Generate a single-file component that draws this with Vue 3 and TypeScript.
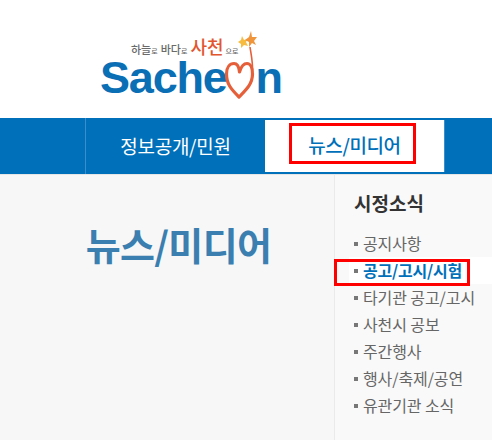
<template>
  <div class="page">
    <header class="top">
      <div class="logo">
        <div class="slogan">
          <span class="s1">하늘</span><span class="s2">로</span>
          <span class="s1">바다</span><span class="s2">로</span>
          <span class="s3">사천</span><span class="s2">으로</span>
        </div>
        <div class="word">
          <span>Sache</span>
          <svg class="heart" viewBox="0 0 30 60" width="30" height="60">
            <path d="M17 -6 L19 -2 L23 -3 L21 0 L23 4 L19 3 L16 6 L16 2 L13 0 L16 -2 Z" fill="#f7bc3f" />
            <path d="M26 -11 L27 -5 L32 -5 L29 -1 L31 3 L27 1 L24 5 L24 0 L20 -2 L24 -5 Z" fill="#f0953a" />
            <path d="M14 55 C6 47 1.5 42 1.5 32 C1.5 25 5 21.5 9 21.5 C12.5 21.5 14 25 14.5 30 C16 25 19 21.5 22 21.5 C25.5 21.5 27.5 26 27.5 32 C27.5 42 21 48 14 55 Z" fill="none" stroke="#e5603a" stroke-width="3.2" stroke-linejoin="round" />
            <path d="M25 5 C26 12 28 20 27.5 30" fill="none" stroke="#e5603a" stroke-width="1.6" />
          </svg>
          <span>n</span>
        </div>
      </div>
    </header>

    <nav class="gnb">
      <a class="tab">정보공개/민원</a>
      <a class="tab on">뉴스/미디어<i class="mark"></i></a>
    </nav>

    <main class="body">
      <section class="lead">
        <h1>뉴스/미디어</h1>
      </section>
      <aside class="side">
        <h2>시정소식</h2>
        <ul>
          <li v-for="item in items" :key="item" :class="{ on: item === current }">
            {{ item }}
            <i v-if="item === current" class="mark"></i>
          </li>
        </ul>
      </aside>
    </main>
  </div>
</template>

<script setup lang="ts">
const current = '공고/고시/시험'
const items: string[] = [
  '공지사항',
  '공고/고시/시험',
  '타기관 공고/고시',
  '사천시 공보',
  '주간행사',
  '행사/축제/공연',
  '유관기관 소식',
]
</script>

<style>
html,
body {
  margin: 0;
  background: #fff;
}
</style>

<style scoped>
.page {
  width: 492px;
  height: 440px;
  overflow: hidden;
  font-family: "Noto Sans CJK KR", "Liberation Sans", sans-serif;
}

.top {
  height: 118px;
  padding-left: 100px;
}
.logo {
  position: relative;
  width: 190px;
  height: 118px;
}
.slogan {
  position: absolute;
  left: 31px;
  top: 36px;
  display: flex;
  align-items: flex-end;
  height: 20px;
  white-space: nowrap;
  color: #6a6a6a;
  font-size: 11px;
  line-height: 14px;
  font-weight: 500;
}
.slogan .s2 {
  font-size: 7px;
  line-height: 10px;
  margin-right: 3px;
}
.slogan .s3 {
  color: #e2562f;
  font-size: 18px;
  line-height: 20px;
  margin-right: 2px;
}
.word {
  position: absolute;
  left: 0;
  top: 58px;
  display: flex;
  align-items: baseline;
  color: #0b6fb5;
  font-family: "Liberation Sans", sans-serif;
  font-size: 45px;
  font-weight: 700;
  line-height: 40px;
  letter-spacing: -1.2px;
}
.heart {
  align-self: flex-start;
  flex: none;
  margin: -16px 1px 0 -2px;
  overflow: visible;
}

.gnb {
  height: 56px;
  box-sizing: border-box;
  padding-left: 85px;
  display: flex;
  background: #0070ba;
}
.tab {
  width: 180px;
  box-sizing: border-box;
  border-left: 1px solid #3b8ecb;
  display: flex;
  align-items: center;
  justify-content: center;
  color: #fff;
  font-size: 19px;
  letter-spacing: -0.25px;
  padding-bottom: 2px;
}
.tab.on {
  position: relative;
  height: 52px;
  margin-top: 2px;
  background: #fff;
  border-left: 0;
  border-right: 1px solid #3b8ecb;
  color: #0070ba;
  font-weight: 500;
  letter-spacing: -0.4px;
  padding-bottom: 4px;
}
.tab.on .mark {
  left: 24px;
  top: 3px;
  width: 127px;
  height: 41px;
}

.mark {
  position: absolute;
  box-sizing: border-box;
  border: 3px solid #f00;
}

.body {
  display: flex;
  height: 266px;
  background: #f7f7f7;
  border-top: 1px solid #e6e6e6;
}
.lead {
  width: 334px;
  flex: none;
  box-sizing: border-box;
  padding: 42px 0 0 23px;
  text-align: center;
}
.lead h1 {
  margin: 0;
  color: #3a7fb0;
  font-size: 38px;
  font-weight: 700;
  line-height: 54px;
  letter-spacing: -0.7px;
}
.side {
  flex: 1;
  box-sizing: border-box;
  background: #f9f9f9;
  border-left: 1px solid #eaeaea;
  padding: 14px 0 0 19px;
}
.side h2 {
  margin: 0 0 13px;
  color: #333;
  font-size: 19px;
  font-weight: 700;
  line-height: 28px;
}
.side ul {
  margin: 0;
  padding: 0;
  list-style: none;
}
.side li {
  position: relative;
  height: 27px;
  line-height: 27px;
  padding-left: 9px;
  color: #666;
  font-size: 16px;
  letter-spacing: -0.1px;
  white-space: nowrap;
}
.side li::before {
  content: "";
  position: absolute;
  left: 0;
  top: 12px;
  width: 4px;
  height: 4px;
  background: #777;
}
.side li.on {
  color: #0070ba;
  font-weight: 700;
  letter-spacing: -0.2px;
  background: #fff;
  margin-left: -5px;
  padding-left: 14px;
}
.side li.on::before {
  left: 5px;
}
.side li.on .mark {
  left: -15px;
  top: 2px;
  width: 136px;
  height: 27px;
}
</style>
